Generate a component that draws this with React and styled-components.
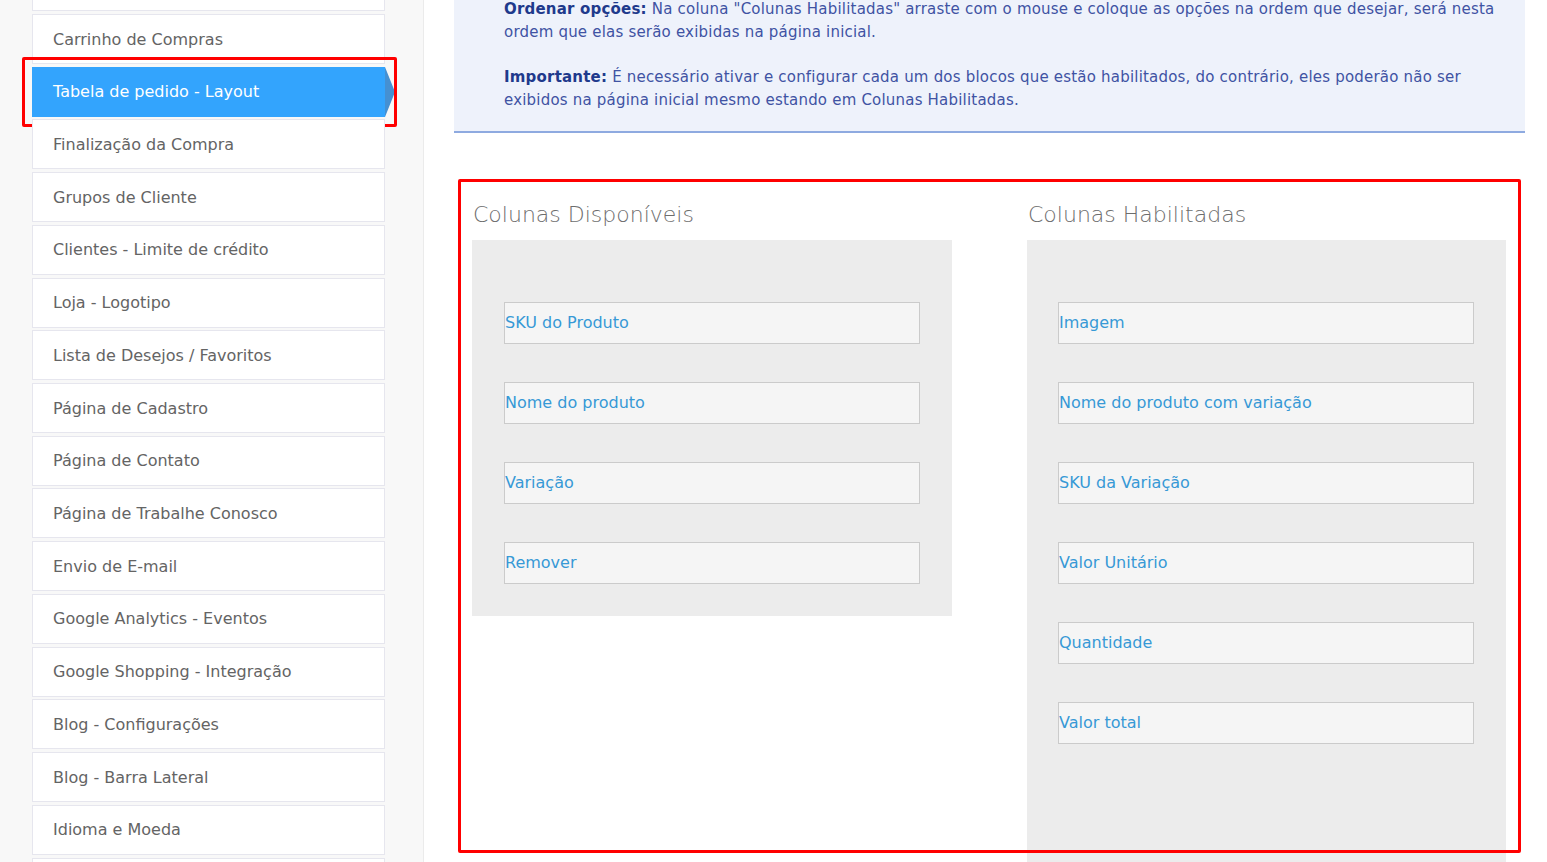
import React from "react";
import styled, { createGlobalStyle } from "styled-components";

const Global = createGlobalStyle`
  html, body { margin: 0; padding: 0; background: #ffffff; }
  body { font-family: "DejaVu Sans", "Noto Sans", sans-serif; overflow: hidden; }
  * { box-sizing: border-box; }
`;

const Page = styled.div`
  display: flex;
  width: 1547px;
  height: 862px;
  overflow: hidden;
`;

const Sidebar = styled.aside`
  width: 424px;
  flex: none;
  background: #f8f8f8;
  border-right: 1px solid #ebebeb;
  padding: 0 38px 0 32px;
`;

const Menu = styled.ul`
  list-style: none;
  margin: -38.73px 0 0 0;
  padding: 0;
  display: flex;
  flex-direction: column;
  gap: 2.73px;
`;

const MenuItem = styled.li`
  position: relative;
  height: 50px;
  flex: none;
  display: flex;
  align-items: center;
  padding-left: 20px;
  font-size: 16px;
  color: ${(p) => (p.$active ? "#ffffff" : "#646464")};
  background: ${(p) => (p.$active ? "#33a4fd" : "#ffffff")};
  border: 1px solid ${(p) => (p.$active ? "#33a4fd" : "#e6e6ee")};
  white-space: nowrap;

  ${(p) =>
    p.$active &&
    `
    &::before {
      content: "";
      position: absolute;
      right: -11px;
      top: -1px;
      width: 0;
      height: 0;
      border-top: 25px solid transparent;
      border-bottom: 25px solid transparent;
      border-left: 10px solid #4590d2;
    }
    &::after {
      content: "";
      position: absolute;
      left: -11px;
      right: -13px;
      top: -11px;
      bottom: -11px;
      border: 3px solid #ff0000;
      border-radius: 2px;
    }
  `}
`;

const Main = styled.main`
  flex: 1;
  padding: 0 22px 0 30px;
`;

const InfoBox = styled.div`
  margin-top: -2.5px;
  background: #eef2fb;
  border-bottom: 2px solid #8eaae0;
  padding: 0 20px 19.5px 50px;
`;

const InfoText = styled.p`
  margin: 0 0 22px 0;
  font-size: 15px;
  line-height: 23px;
  letter-spacing: 0.2px;
  color: #4053a3;
  white-space: nowrap;
  &:last-child { margin-bottom: 0; }
`;

const Strong = styled.strong`
  font-weight: 700;
  color: #1f3a8c;
`;

const ColumnsSection = styled.section`
  position: relative;
  display: grid;
  grid-template-columns: 480px 479px;
  column-gap: 75px;
  align-items: start;
  padding: 68px 0 0 18px;

  &::after {
    content: "";
    position: absolute;
    left: 4px;
    right: 4px;
    top: 46px;
    height: 668px;
    border: 3px solid #ff0000;
    border-radius: 2px;
    pointer-events: none;
  }
`;

const Column = styled.div`
  display: flex;
  flex-direction: column;
`;

const ColumnTitle = styled.h3`
  margin: 0 0 11px 1px;
  font-size: 22px;
  line-height: 28px;
  font-weight: 300;
  color: #6d6d6d;
  white-space: nowrap;
`;

const Panel = styled.div`
  background: #ececec;
  display: flex;
  flex-direction: column;
  gap: 38px;
  padding: 62px 32px 32px ${(p) => p.$padLeft || 32}px;
  min-height: ${(p) => p.$minHeight || 0}px;
`;

const Option = styled.div`
  height: 42px;
  background: #f5f5f5;
  border: 1px solid #cbcbcb;
  font-size: 16px;
  line-height: 40px;
  color: #3799d6;
  white-space: nowrap;
`;

const menu = [
  "Carrinho de Compras",
  "Tabela de pedido - Layout",
  "Finalização da Compra",
  "Grupos de Cliente",
  "Clientes - Limite de crédito",
  "Loja - Logotipo",
  "Lista de Desejos / Favoritos",
  "Página de Cadastro",
  "Página de Contato",
  "Página de Trabalhe Conosco",
  "Envio de E-mail",
  "Google Analytics - Eventos",
  "Google Shopping - Integração",
  "Blog - Configurações",
  "Blog - Barra Lateral",
  "Idioma e Moeda",
];

const available = ["SKU do Produto", "Nome do produto", "Variação", "Remover"];
const enabled = [
  "Imagem",
  "Nome do produto com variação",
  "SKU da Variação",
  "Valor Unitário",
  "Quantidade",
  "Valor total",
];

export default function App() {
  return (
    <>
      <Global />
      <Page>
        <Sidebar>
          <Menu>
            <MenuItem aria-hidden="true" />
            {menu.map((m) => (
              <MenuItem key={m} $active={m === "Tabela de pedido - Layout"}>
                {m}
              </MenuItem>
            ))}
            <MenuItem aria-hidden="true" />
          </Menu>
        </Sidebar>
        <Main>
          <InfoBox>
            <InfoText>
              <Strong>Ordenar opções:</Strong> Na coluna "Colunas Habilitadas" arraste com o mouse e coloque as opções na ordem que desejar, será nesta
              <br />
              ordem que elas serão exibidas na página inicial.
            </InfoText>
            <InfoText>
              <Strong>Importante:</Strong> É necessário ativar e configurar cada um dos blocos que estão habilitados, do contrário, eles poderão não ser
              <br />
              exibidos na página inicial mesmo estando em Colunas Habilitadas.
            </InfoText>
          </InfoBox>
          <ColumnsSection>
            <Column>
              <ColumnTitle>Colunas Disponíveis</ColumnTitle>
              <Panel>
                {available.map((o) => (
                  <Option key={o}>{o}</Option>
                ))}
              </Panel>
            </Column>
            <Column>
              <ColumnTitle>Colunas Habilitadas</ColumnTitle>
              <Panel $padLeft={31} $minHeight={660}>
                {enabled.map((o) => (
                  <Option key={o}>{o}</Option>
                ))}
              </Panel>
            </Column>
          </ColumnsSection>
        </Main>
      </Page>
    </>
  );
}
